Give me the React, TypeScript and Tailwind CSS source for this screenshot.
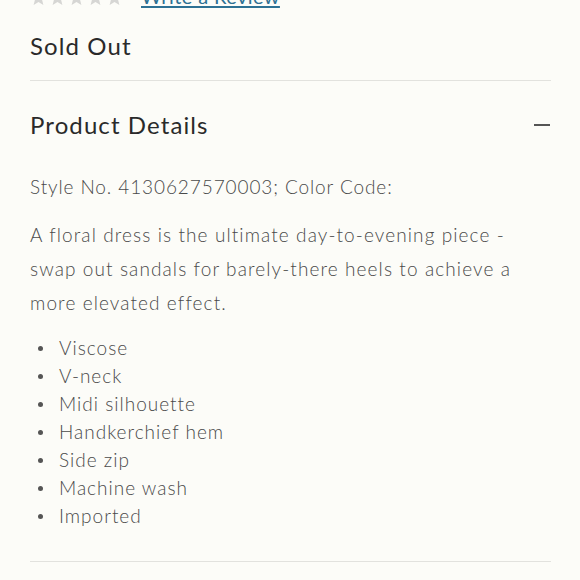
import React from "react";

const Star = () => (
  <svg width="17" height="16" viewBox="0 0 24 23" className="fill-[#d6d6d4]">
    <path d="M12 0l3.1 7.6 8.2.6-6.3 5.3 2 8-7-4.4-7 4.4 2-8L.7 8.2l8.2-.6z" />
  </svg>
);

const items = [
  "Viscose",
  "V-neck",
  "Midi silhouette",
  "Handkerchief hem",
  "Side zip",
  "Machine wash",
  "Imported",
];

export default function App() {
  return (
    <div
      className="w-[580px] h-[580px] overflow-hidden bg-[#fcfcf8] px-[30px]"
      style={{ fontFamily: "Lato, 'Noto Sans', sans-serif" }}
    >
      <div className="-mt-[13px] flex items-end h-[20px]">
        <div className="flex gap-[2px] pb-[1px]">
          <Star />
          <Star />
          <Star />
          <Star />
          <Star />
        </div>
        <a className="ml-[18px] text-[20px] leading-[22px] tracking-[0.4px] text-[#2d7194] underline underline-offset-2">
          Write a Review
        </a>
      </div>
      <div className="mt-[24px] text-[24px] leading-[30px] tracking-[1.1px] text-[#2a2a2a]">
        Sold Out
      </div>
      <div className="mt-[19px] border-t border-[#e2e2de] w-[521px]" />
      <div className="flex items-center justify-between w-[521px] pt-[29px]">
        <div className="text-[24px] leading-[30px] tracking-[1.1px] text-[#2a2a2a]">
          Product Details
        </div>
        <div className="w-[16px] h-[2px] bg-[#555] mr-[1px]" />
      </div>
      <div className="mt-[35px] text-[19px] leading-[24px] tracking-[0.9px] font-light text-[#4a4a4a]">
        Style No.&nbsp;4130627570003;&nbsp;Color Code:
      </div>
      <p className="mt-[19px] w-[521px] text-[19px] leading-[34px] tracking-[1.1px] font-light text-[#4a4a4a]">
        A floral dress is the ultimate day-to-evening piece - swap out sandals for barely-there heels to achieve a more elevated effect.
      </p>
      <ul className="mt-[14px] text-[19px] leading-[28px] tracking-[1px] font-light text-[#4a4a4a]">
        {items.map((t) => (
          <li key={t} className="flex items-center">
            <span className="w-[5px] h-[5px] rounded-full bg-[#555] ml-[8px] mr-[16px]" />
            {t}
          </li>
        ))}
      </ul>
      <div className="mt-[31px] border-t border-[#e2e2de] w-[521px]" />
    </div>
  );
}
